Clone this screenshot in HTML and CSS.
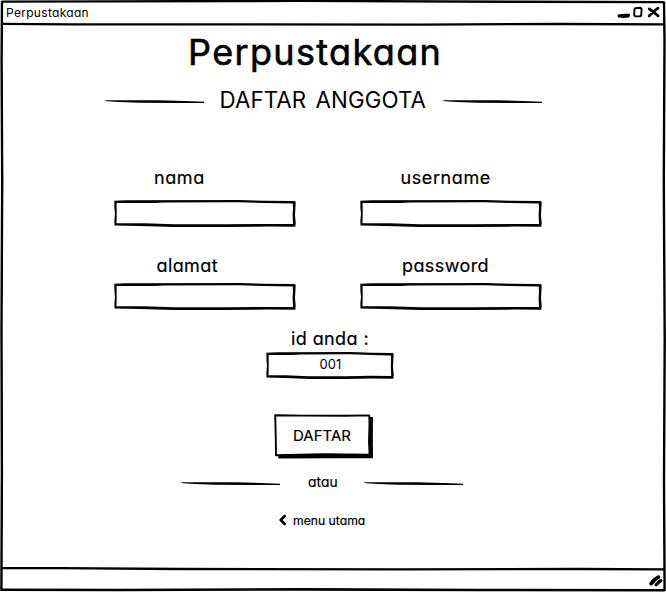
FILE: index.html
```html
<!DOCTYPE html>
<html lang="id">
<head>
<meta charset="utf-8">
<title>Perpustakaan</title>
<link rel="stylesheet" href="styles.css">
</head>
<body>
<svg class="defs" width="0" height="0" aria-hidden="true">
  <symbol id="box" viewBox="0 0 182 28" preserveAspectRatio="none">
    <path fill-rule="evenodd" d="M0.3 0.8 L12 0.2 L125 0.1 L150 0.7 L180.5 1 L181.7 2 L181.4 8 L181 15 L181.7 23 L181.3 26.8 L155 26.6 L110 27 L60 27 L25 26 L0.5 25.6 L0.4 20 L1 14 L0.4 8 Z M2.6 3.1 L2.7 14 L2.5 23.2 L30 23.2 L60 24.2 L110 24.2 L150 23.9 L179 24 L178.6 14 L179 9 L178.8 3.4 L150 3.1 L125 2.3 L50 2.4 L40 3 Z"/>
  </symbol>
  <symbol id="rule" viewBox="0 0 100 4" preserveAspectRatio="none">
    <path d="M0 .2 L55 .2 L80 .9 L100 1.7 V3 L70 2.9 L35 2.7 L15 2 L3 1.3 Z"/>
  </symbol>
</svg>
<div class="window">
  <svg class="frame" viewBox="0 0 666 592" aria-hidden="true">
    <path d="M1.5 1.6 L110 1.4 L300 .9 L520 1.8 L664 2.1" stroke-width="2.4"/>
    <path d="M2 1 L1.6 60 L2.2 180 L1.5 330 L1.9 470 L1.4 591" stroke-width="2.4"/>
    <path d="M664 1.5 L664.5 40 L663.8 180 L664.7 340 L664 480 L664.6 591" stroke-width="2.4"/>
    <path d="M2 23.8 L70 24.3 L220 24.4 L420 24.6 L560 24 L664 24.3" stroke-width="2.3"/>
    <path d="M2 568.1 L60 568.2 L180 569 L400 569.3 L580 569 L664 569.3" stroke-width="2.3"/>
    <path d="M1 589.8 L120 590 L300 589.4 L480 590 L665 590.3" stroke-width="2.6"/>
  </svg>
  <header class="titlebar">
    <span class="caption">Perpustakaan</span>
    <svg class="controls" width="44" height="14" viewBox="0 0 44 14" aria-label="Window controls">
      <path d="M1.2 8.5 C3 7.8 9 7.8 12.6 7.7 C13.4 8.7 12.8 11.2 11.6 11.5 C8 12 3 12 1.4 11.5 C.3 10.8.3 9.2 1.2 8.5Z"/>
      <path class="line" d="M18.2 2.2 L23.3 1.7 L24.6 3 L24.2 9.6 L22.8 10.4 L18.3 10.3 L17.2 9 L17.4 3.4 Z" stroke-width="1.9"/>
      <path class="line" d="M32.3 3 Q37 6 41.2 9.9 M41 2.2 Q36.8 5 32.2 9.9" stroke-width="2.7"/>
    </svg>
  </header>
  <main class="content">
    <h1 class="title">Perpustakaan</h1>
    <div class="divider divider-heading">
      <svg class="rule" viewBox="0 0 100 4"><use href="#rule"/></svg>
      <h2 class="subtitle">DAFTAR ANGGOTA</h2>
      <svg class="rule" viewBox="0 0 100 4"><use href="#rule"/></svg>
    </div>
    <form class="form">
      <div class="field"><label class="label nama">nama</label><svg class="input"><use href="#box"/></svg></div>
      <div class="field"><label class="label username">username</label><svg class="input"><use href="#box"/></svg></div>
      <div class="field"><label class="label alamat">alamat</label><svg class="input"><use href="#box"/></svg></div>
      <div class="field"><label class="label password">password</label><svg class="input"><use href="#box"/></svg></div>
    </form>
    <div class="member">
      <div class="label member-label">id anda :</div>
      <div class="member-box">
        <svg class="member-frame" viewBox="0 0 128 28" aria-hidden="true">
          <path fill-rule="evenodd" d="M.4 .8 L12 .2 L85 .1 L105 .7 L126.5 1 L127.7 2 L127.3 8 L127 15 L127.8 23 L127.3 26.8 L105 26.4 L80 27 L45 27 L18 26 L.5 25.6 L.4 20 L1 14 L.5 8 Z M2.6 3.1 L2.7 14 L2.5 23.2 L20 23.2 L42 24.2 L80 24.2 L105 23.7 L125.2 24 L124.8 14 L125.1 9 L124.9 3.4 L105 3 L85 2.3 L35 2.4 L25 3 Z"/>
        </svg>
        <span class="member-id">001</span>
      </div>
    </div>
    <button class="submit" type="button">
      <svg class="submit-frame" viewBox="0 0 100 45" aria-hidden="true">
        <path d="M96 3 L99 3 L98.8 20 L99 44.2 L60 44.3 L4.5 44.5 L4 41 L95 40 Z"/>
        <path class="face" d="M1.2 1.2 L30 1.6 L70 1.7 L95.3 1.4 L95.5 10 L95 28 L95.6 40.6 L50 40.3 L2 41.2 L1.8 25 Z"/>
      </svg>
      <span class="submit-text">DAFTAR</span>
    </button>
    <div class="divider divider-or">
      <svg class="rule" viewBox="0 0 100 4"><use href="#rule"/></svg>
      <span class="or">atau</span>
      <svg class="rule" viewBox="0 0 100 4"><use href="#rule"/></svg>
    </div>
    <a class="back">
      <svg class="chevron" width="8" height="12" viewBox="0 0 8 12" aria-hidden="true"><path d="M5.7 2 L1.7 6 L5.7 10"/></svg>
      <span>menu utama</span>
    </a>
  </main>
  <footer class="statusbar">
    <svg width="14" height="12" viewBox="0 0 14 12" aria-hidden="true">
      <path d="M2.2 8.6 Q4.8 4.8 9.4 2.2" stroke-width="3.8"/>
      <path d="M7.2 9.7 Q9 7.4 11.8 5.6" stroke-width="3.2"/>
    </svg>
  </footer>
</div>
</body>
</html>
```
FILE: styles.css
```css
* { box-sizing: border-box; }
body {
  margin: 0;
  background: #fff;
  color: #000;
  font-family: Inter, "Liberation Sans", sans-serif;
  font-feature-settings: "cv11" 1;
  -webkit-text-stroke: .2px #000;
}
h1, h2 { margin: 0; font-weight: 400; }
svg { display: block; flex: none; }
.defs { position: absolute; }
.window {
  position: relative;
  display: flex;
  flex-direction: column;
  width: 666px;
  height: 592px;
  overflow: hidden;
}
.frame {
  position: absolute;
  inset: 0;
  fill: none;
  stroke: #000;
  pointer-events: none;
}
.titlebar {
  display: flex;
  justify-content: space-between;
  height: 26px;
  padding: 6px 5px 0 6px;
}
.caption { font-size: 12px; line-height: 14px; letter-spacing: .3px; -webkit-text-stroke: 0; }
.controls .line { fill: none; stroke: #000; stroke-linecap: round; stroke-linejoin: round; }
.content {
  display: flex;
  flex-direction: column;
  align-items: flex-start;
  flex: 1;
  padding-top: 2px;
}
.title {
  margin-left: 188px;
  font-size: 36px;
  line-height: 48px;
  letter-spacing: 1.35px;
  white-space: nowrap;
  -webkit-text-stroke: .6px #000;
}
.divider { display: flex; align-items: flex-start; }
.rule { width: 100px; height: 4px; margin-top: 15px; }
.divider-heading { height: 30px; margin: 9px 0 0 104px; }
.subtitle {
  width: 238px;
  padding-left: 15.5px;
  font-size: 22.3px;
  line-height: 30px;
  letter-spacing: .1px;
  word-spacing: 3px;
  white-space: nowrap;
  -webkit-text-stroke: 0;
}
.form {
  display: grid;
  grid-template-columns: 182px 182px;
  column-gap: 64px;
  margin: 51px 0 0 114px;
}
.field { display: flex; flex-direction: column; align-items: flex-start; height: 88px; }
.field:nth-child(n+3) { height: 73px; }
.label {
  font-size: 18px;
  line-height: 24px;
  letter-spacing: .6px;
  white-space: nowrap;
}
.input { width: 182px; height: 28px; margin-top: 10px; }
.field:nth-child(n+3) .input { margin-top: 5px; }
.nama { margin-left: 40px; }
.username { margin-left: 40.5px; }
.alamat { margin-left: 42.5px; letter-spacing: .4px; }
.password { margin-left: 42px; letter-spacing: .4px; }
.member { width: 128px; margin-left: 266px; }
.member-label { padding-left: 25px; letter-spacing: .4px; }
.member-box { display: grid; height: 28px; margin-top: 1px; }
.member-frame, .member-id { grid-area: 1 / 1; }
.member-frame { width: 128px; height: 28px; }
.member-id { padding-left: 1px; text-align: center; font-size: 13px; line-height: 24px; letter-spacing: .1px; -webkit-text-stroke: 0; }
.submit {
  display: grid;
  width: 100px;
  height: 45px;
  margin: 34px 0 0 274px;
  padding: 0;
  border: 0;
  background: none;
  color: #000;
  font: inherit;
  font-feature-settings: inherit;
}
.submit-frame, .submit-text { grid-area: 1 / 1; }
.submit-frame { width: 100px; height: 45px; }
.submit-frame .face { fill: #fff; stroke: #000; stroke-width: 1.9; stroke-linejoin: round; }
.submit-text { padding-right: 4px; font-size: 15px; line-height: 44px; }
.divider-or { height: 20px; margin: 13px 0 0 180px; }
.divider-or .rule { margin-top: 10px; }
.or { width: 83px; padding-left: 28px; font-size: 13.8px; line-height: 20px; letter-spacing: .1px; }
.back {
  display: flex;
  gap: 6px;
  height: 20px;
  margin: 19px 0 0 279px;
  font-size: 12.2px;
  line-height: 20px;
  white-space: nowrap;
}
.chevron { margin-top: 3px; fill: none; stroke: #000; stroke-width: 2.6; stroke-linecap: round; stroke-linejoin: round; }
.statusbar { display: flex; justify-content: flex-end; height: 22px; padding: 5px 3px 0 0; }
.statusbar svg { fill: none; stroke: #000; stroke-linecap: round; }
```
